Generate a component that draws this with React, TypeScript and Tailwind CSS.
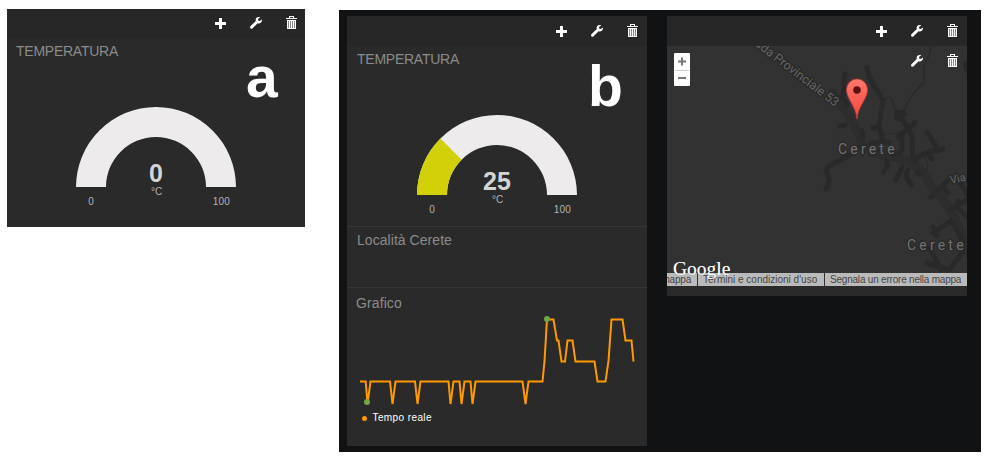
import React from "react";

const sans = "font-['Liberation_Sans',Arial,sans-serif]";

function Plus() {
  return (
    <svg width="11" height="11" viewBox="0 0 11 11" className="mt-[2px] block" fill="#fff">
      <path d="M4 0h3v4h4v3H7v4H4V7H0V4h4z" />
    </svg>
  );
}

function Wrench() {
  return (
    <svg width="12" height="12" viewBox="0 0 12 12" className="mt-px block" fill="#fff">
      <path d="M10.3.3C8.900-.3 7.200 0 6.300 1.100c-.7.9-.8 1.900-.5 2.900L.6 9.100c-.8.800-.7 1.700-.2 2.200.6.700 1.500.700 2.200 0L7.600 6.300c1.300.4 2.500.1 3.400-.8.900-.8 1.100-1.900.9-2.900L9.900 4.100 8.200 3.600 8 2z" />
    </svg>
  );
}

function Trash() {
  return (
    <svg width="11" height="13" viewBox="0 0 11 13" className="block">
      <path d="M3 2V0h5v2h3v1H0V2zM4 1v1h3V1z" fill="#fff" fillRule="evenodd" />
      <path d="M1 4h9v9H1z" fill="#fff" />
      <path d="M2.500 5v7M4.500 5v7M6.500 5v7M8.500 5v7" stroke="#8a8a8a" />
    </svg>
  );
}

function Header({ className }: { className: string }) {
  return (
    <div className={`flex items-start justify-end gap-6 bg-[#272727] ${className}`}>
      <Plus />
      <Wrench />
      <Trash />
    </div>
  );
}

function Gauge({ value }: { value: number }) {
  const angle = Math.PI * (1 - value / 100);
  const c = Math.cos(angle);
  const s = -Math.sin(angle);
  return (
    <svg width="170" height="110" viewBox="-85 -85 170 110" className={`block ${sans}`}>
      <path d="M-80 0A80 80 0 0 1 80 0H50A50 50 0 0 0-50 0z" fill="#edebeb" />
      {value > 0 && (
        <path
          d={`M-80 0A80 80 0 0 1 ${80 * c} ${80 * s}L${50 * c} ${50 * s}A50 50 0 0 0 -50 0z`}
          fill="#d2d008"
        />
      )}
      <g textAnchor="middle" fill="#b3b3b3" fontSize="10">
        <text y="-5" fontSize="25" fontWeight="700" fill="#d3d4d4">{value}</text>
        <text x="0.5" y="8">°C</text>
        <text x="-65" y="18">0</text>
        <text x="65.500" y="18" letterSpacing="0.2">100</text>
      </g>
    </svg>
  );
}

const chartPoints =
  "13,93.500 18.700,93.500 20.500,116 23.500,93.500 43,93.500 45.500,116 48.500,93.500 68,93.500 70.500,116 73.500,93.500 101.500,93.500 103.500,116 106.500,93.500 112.500,93.500 114.500,116 117.500,93.500 123.500,93.500 125.500,116 128.500,93.500 175.500,93.500 178.500,116 181.500,93.500 195.500,93.500 197.500,73 200,31.500 206.500,31.500 210,52.500 211.500,52.500 214.500,73.500 218,73.500 220.500,52.500 225.500,52.500 228.500,73.500 247.500,73.500 250.500,93.500 258.500,93.500 261.500,73 264.500,31.500 275.500,31.500 278.500,52.500 284.500,52.500 286.500,73.500";

function Roads() {
  return (
    <g fill="none" strokeLinecap="round" strokeLinejoin="round" stroke="#292929">
      <path
        d="M166 47C177 63 188 77 195 96C204 111 220 109 233 112C258 120 259 136 270 147C285 161 291 180 302 207"
        stroke="#2d2d2d"
        strokeWidth="9"
      />
      <g strokeWidth="5">
        <path d="M193 101L183 109L162 120Q158 123 160 128Q165 135 159 143" />
        <path d="M173 80L178 79M178 28L176 51L180 59" />
        <path d="M200 22Q203 36 210 44L216 55L214 67L212 80L216 96M206 82L212 80" />
        <path d="M195 85L196 91M204 97L222 96M204 108V105" />
        <path d="M232 67L245 90M248 77L231 91M235 88V103Q233 108 226 109M245 95L246 112M233 73L230 72" />
        <path d="M260 86L271 103M276 103L258 107L248 114M261 107L265 113" />
        <path d="M220 115L221 120L216 126M235 121L229 134M241 124Q236 129 245 139M250 127L252 128M263 151L265 150" />
        <path d="M271 144L281 134Q294 130 302 153M276 141L281 147M291 155V162L302 173M284 163L300 154" />
        <path d="M266 187L284 175L295 192V207L282 224L260 217M255 197L265 206L274 224M266 181L270 190" />
        <path d="M299 18Q297 22 301 25" />
      </g>
      <path d="M228 65H239V70H228z" fill="#292929" strokeWidth="1" />
      <path
        d="M264 0Q264 8 257 19L257 36L245 49L235 67M217 54Q225 47 226 58L232 68M216 89L235 86M257 109L261 119L259 125"
        strokeWidth="1.200"
      />
    </g>
  );
}

function Map() {
  return (
    <svg width="300" height="240" viewBox="0 0 300 240" className="block bg-[#323232]">
      <Roads />
      <g
        fill="#737373"
        stroke="#2a2a2a"
        strokeWidth="3"
        strokeLinejoin="round"
        paintOrder="stroke"
        className="font-[Roboto,sans-serif]"
      >
        <text x="171" y="108" fontSize="14" letterSpacing="3.200">Cerete</text>
        <text x="240" y="204" fontSize="14" letterSpacing="3.200">Cerete</text>
        <text transform="translate(87 -1) rotate(37.500)" fontSize="12.500" fill="#666">ada Provinciale 53</text>
        <text transform="translate(284 138) rotate(-13)" fontSize="11" fill="#666">Via</text>
      </g>
      <defs>
        <linearGradient id="pin" x1="0" y1="0" x2="0" y2="1">
          <stop offset="0" stopColor="#ff776b" />
          <stop offset="1" stopColor="#f5443b" />
        </linearGradient>
      </defs>
      <path
        d="M190 73C189 60 179.500 53 179.500 43.500a10.500 10.500 0 0 1 21 0C200.500 53 191 60 190 73z"
        fill="url(#pin)"
        stroke="#c23d34"
        strokeWidth="0.800"
      />
      <circle cx="190" cy="44" r="3.800" fill="#5b120f" />
    </svg>
  );
}

function TemperaturePanel() {
  return (
    <div className={`mt-[9px] h-[218px] w-[298px] shrink-0 bg-[#2a2a2a] ${sans}`}>
      <Header className="h-[29px] pt-[7px] pr-2" />
      <div className="relative h-[189px]">
        <h2 className="h-[64px] pt-[4px] pl-[9px] text-[14px] leading-[18px] tracking-[-0.25px] text-[#8b8b8b]">TEMPERATURA</h2>
        <div className="pl-[64px]"><Gauge value={0} /></div>
        <span className="absolute top-[6px] left-[239px] text-[57px] leading-[66px] font-bold text-white">a</span>
      </div>
    </div>
  );
}

function Dashboard() {
  return (
    <div className={`mt-[10px] ml-[34px] flex h-[442px] w-[642px] shrink-0 items-start gap-5 bg-[#111214] px-2 pt-1.5 ${sans}`}>
      <div className="h-[430px] w-[300px] bg-[#2a2a2a] text-[14px] leading-[18px] text-[#8b8b8b]">
        <Header className="h-[30px] pt-[8px] pr-[9px]" />
        <section className="relative h-[180px]">
          <h2 className="h-[64px] pt-[4px] pl-[10px] tracking-[-0.25px]">TEMPERATURA</h2>
          <div className="pl-[65px]"><Gauge value={25} /></div>
          <span className="absolute top-[7px] left-[241px] text-[57px] leading-[66px] font-bold text-white">b</span>
        </section>
        <section className="h-[61px] border-t border-[#363636] pt-[4px] pl-[10px]">
          <h2 className="tracking-[0.05px]">Località Cerete</h2>
        </section>
        <section className="relative h-[159px] border-t border-[#363636]">
          <h2 className="absolute top-[6px] left-[9px] tracking-[0.1px]">Grafico</h2>
          <svg width="300" height="123" viewBox="0 0 300 123" className="block">
            <polyline points={chartPoints} fill="none" stroke="#ff9900" strokeWidth="2" strokeMiterlimit="2" />
            <circle cx="200" cy="31" r="3" fill="#70a845" />
            <circle cx="20" cy="114" r="3" fill="#70a845" />
          </svg>
          <div className="flex items-center gap-[6px] pl-[14.5px] text-[10px] leading-[14px] tracking-[0.4px] text-white">
            <i className="block size-[5px] rounded-full bg-[#ff9900]" />
            Tempo reale
          </div>
        </section>
      </div>
      <div className="h-[280px] w-[300px] bg-[#2a2a2a]">
        <Header className="h-[30px] pt-[8px] pr-[9px]" />
        <div className="relative h-[240px] overflow-hidden">
          <Map />
          <div className="absolute top-[7px] left-[7px] flex h-[33px] w-4 flex-col items-center rounded-[1px] bg-white">
            <svg width="16" height="33" viewBox="0 0 16 33">
              <path d="M4 8.500h8M8 4.500v8M4 25h8" stroke="#777" strokeWidth="2" />
              <path d="M1 17.500h14" stroke="#ccc" />
            </svg>
          </div>
          <div className="absolute top-[8px] right-[9px] flex gap-6">
            <Wrench />
            <Trash />
          </div>
          <div className="absolute bottom-0 left-0 flex h-[13px] w-full justify-end text-[10px] leading-[14px] whitespace-nowrap text-[#444]">
            <span className="w-[30px] shrink-0 overflow-hidden bg-[#bababa]">
              <span className="float-right pr-[6px] tracking-[-0.2px]">mappa</span>
            </span>
            <span className="ml-px w-[126px] shrink-0 bg-[#bababa] pl-[5px]">Termini e condizioni d'uso</span>
            <span className="ml-px w-[142px] shrink-0 bg-[#bababa] pl-[5px] tracking-[-0.21px]">Segnala un errore nella mappa</span>
          </div>
          <span className="absolute top-[212px] left-[6px] font-['Liberation_Serif',serif] text-[19.5px] leading-[22px] text-white [text-shadow:0_0_1px_#666]">Google</span>
        </div>
      </div>
    </div>
  );
}

export default function App() {
  return (
    <main className="flex h-[464px] w-[990px] items-start overflow-hidden bg-white pl-[7px]">
      <TemperaturePanel />
      <Dashboard />
    </main>
  );
}
